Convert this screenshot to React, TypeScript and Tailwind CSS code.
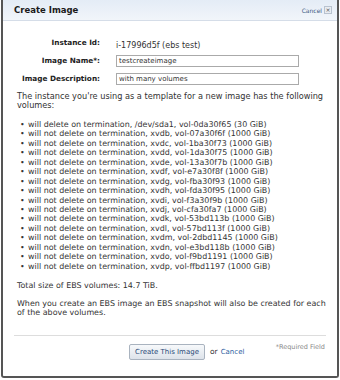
import React from 'react'

const vols = [
  ['will delete on termination', '/dev/sda1', 'vol-0da30f65', '30 GiB'],
  ['will not delete on termination', 'xvdb', 'vol-07a30f6f', '1000 GiB'],
  ['will not delete on termination', 'xvdc', 'vol-1ba30f73', '1000 GiB'],
  ['will not delete on termination', 'xvdd', 'vol-1da30f75', '1000 GiB'],
  ['will not delete on termination', 'xvde', 'vol-13a30f7b', '1000 GiB'],
  ['will not delete on termination', 'xvdf', 'vol-e7a30f8f', '1000 GiB'],
  ['will not delete on termination', 'xvdg', 'vol-fba30f93', '1000 GiB'],
  ['will not delete on termination', 'xvdh', 'vol-fda30f95', '1000 GiB'],
  ['will not delete on termination', 'xvdi', 'vol-f3a30f9b', '1000 GiB'],
  ['will not delete on termination', 'xvdj', 'vol-cfa30fa7', '1000 GiB'],
  ['will not delete on termination', 'xvdk', 'vol-53bd113b', '1000 GiB'],
  ['will not delete on termination', 'xvdl', 'vol-57bd113f', '1000 GiB'],
  ['will not delete on termination', 'xvdm', 'vol-2dbd1145', '1000 GiB'],
  ['will not delete on termination', 'xvdn', 'vol-e3bd118b', '1000 GiB'],
  ['will not delete on termination', 'xvdo', 'vol-f9bd1191', '1000 GiB'],
  ['will not delete on termination', 'xvdp', 'vol-ffbd1197', '1000 GiB'],
]

function Row({ label, children }) {
  return (
    <div className="flex items-center h-[18px]">
      <div className="w-[97px] text-right font-bold text-[7.3px] text-[#222]">{label}</div>
      <div className="ml-[16px] flex-1">{children}</div>
    </div>
  )
}

export default function App() {
  return (
    <div className="w-[340px] h-[380px] bg-white" style={{ fontFamily: '"DejaVu Sans", Verdana, sans-serif' }}>
      <div className="ml-[1px] w-[338px] h-[378px] border-x-2 border-b-2 border-[#555] rounded-b-[3px] flex flex-col text-[#333]">
        <div className="h-[21px] flex items-center justify-between pl-[11px] pr-[5px] bg-gradient-to-b from-[#e4ecf6] to-[#f1f5fa] border-b border-[#d5dde8]">
          <span className="font-bold text-[8.5px] text-[#1a1a1a]">Create Image</span>
          <span className="flex items-center gap-[2px] text-[6px] text-[#3b5a82]">
            Cancel
            <span className="w-[8px] h-[8px] border border-[#b8c2cf] bg-[#e8ecf1] text-[6px] leading-none flex items-center justify-center text-[#555]">×</span>
          </span>
        </div>
        <div className="pt-[13px] flex flex-col">
          <Row label="Instance Id:">
            <span className="text-[8px]">i-17996d5f (ebs test)</span>
          </Row>
          <Row label="Image Name*:">
            <div className="w-[183px] h-[12px] border border-[#aaa] pl-[2px] text-[7px] flex items-center">testcreateimage</div>
          </Row>
          <Row label="Image Description:">
            <div className="w-[183px] h-[12px] border border-[#aaa] pl-[2px] text-[7px] flex items-center">with many volumes</div>
          </Row>
        </div>
        <div className="pl-[14px] pr-[6px] pt-[4px] text-[7.95px] leading-[8.5px]">
          <p className="text-[8.2px]">The instance you're using as a template for a new image has the following volumes:</p>
          <ul className="mt-[11px] leading-[9.43px]">
            {vols.map((v, i) => (
              <li key={i} className="flex">
                <span className="w-[11px] pl-[3px]">•</span>
                <span>{v[0]}, {v[1]}, {v[2]} ({v[3]})</span>
              </li>
            ))}
          </ul>
          <p className="mt-[11px]">Total size of EBS volumes: 14.7 TiB.</p>
          <p className="mt-[8px] leading-[9.3px]">When you create an EBS image an EBS snapshot will also be created for each of the above volumes.</p>
        </div>
        <div className="mx-[11px] mt-[18px] border-t border-[#ddd]" />
        <div className="flex items-start mt-[7px] px-[11px]">
          <div className="flex items-center pt-[1px] ml-[115px]">
            <button className="h-[16px] w-[76px] border border-[#a9b3bf] bg-gradient-to-b from-[#f7f9fb] to-[#dde3ea] text-[7px] text-[#2a4a78] rounded-[2px]">Create This Image</button>
            <span className="ml-[5px] text-[7.5px] text-[#333]">or</span>
            <span className="ml-[3px] text-[7px] text-[#2a5ca0]">Cancel</span>
          </div>
          <div className="flex-1 text-right text-[6.5px] text-[#888] pr-[1px]">*Required Field</div>
        </div>
      </div>
    </div>
  )
}
